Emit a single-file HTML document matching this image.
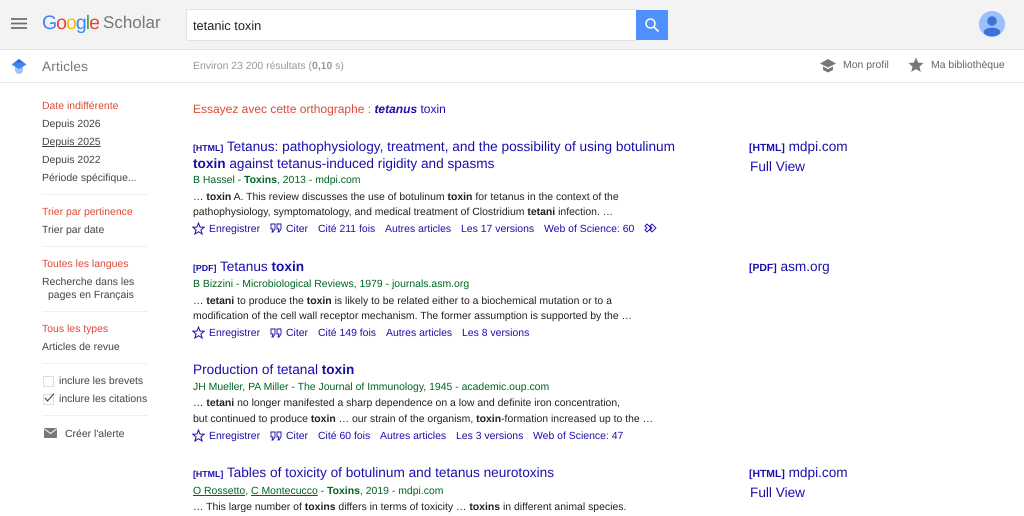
<!DOCTYPE html>
<html><head><meta charset="utf-8"><style>
html,body{margin:0;padding:0;background:#fff;}
body{width:1024px;height:516px;overflow:hidden;position:relative;font-family:"Liberation Sans",sans-serif;font-size:10.45px;color:#222;text-rendering:geometricPrecision;filter:blur(.25px);}
.t{position:absolute;white-space:nowrap;line-height:14px;}
.s{color:#444;}
.r{color:#dd4b39;}
.l{color:#1a0dab;}
.d{color:#222;}
.g{color:#006621;}
.s,.r,.l,.d,.g{margin-top:1px;}
.h{font-size:13.63px;line-height:18px;color:#1a0dab;}
.tag{font-size:8.8px;font-weight:bold;color:#1a0dab;}
.tg2{font-size:10.4px;font-weight:bold;color:#1a0dab;}
.hr{position:absolute;left:42px;width:106px;height:1px;background:#efefef;}
svg{position:absolute;}
</style></head><body>
<div style="position:absolute;left:0;top:0;width:1024px;height:49px;background:#f3f3f3;border-bottom:1px solid #e4e4e4"></div>
<div style="position:absolute;left:0;top:82px;width:1024px;height:1px;background:#e8e8e8"></div>

<svg style="left:11px;top:18px" width="16" height="12"><path d="M0 1H16M0 5.5H16M0 10H16" stroke="#6f6f6f" stroke-width="1.7"/></svg>
<div class="t" style="left:42px;top:10px;font-size:19.5px;line-height:26px;letter-spacing:-1px"><span style="color:#4285f4">G</span><span style="color:#ea4335">o</span><span style="color:#fbbc05">o</span><span style="color:#4285f4">g</span><span style="color:#34a853">l</span><span style="color:#ea4335">e</span></div>
<div class="t" style="left:103px;top:10px;font-size:17px;line-height:26px;color:#777">Scholar</div>

<div style="position:absolute;left:186px;top:9px;width:450px;height:30px;background:#fff;border:1px solid #e2e2e2;border-right:0"></div>
<div class="t" style="left:193px;top:19px;font-size:12.8px;color:#222">tetanic toxin</div>
<div style="position:absolute;left:636px;top:10px;width:32px;height:30px;background:#4d90fe;border-radius:0 1px 1px 0"></div>
<svg style="left:644px;top:17px" width="16" height="16"><circle cx="6.5" cy="6.5" r="4.5" fill="none" stroke="#fff" stroke-width="1.5"/><path d="M10 10L14.5 14.5" stroke="#fff" stroke-width="1.7"/></svg>
<svg style="left:979px;top:11px" width="26" height="26"><circle cx="13" cy="13" r="13" fill="#9cc0fb"/><circle cx="13" cy="10" r="4.8" fill="#3f72d9"/><ellipse cx="13" cy="21" rx="8.2" ry="4.4" fill="#3f72d9"/></svg>

<svg style="left:11px;top:58px" width="16" height="16"><path d="M8 8L12 8.5V12A4 4 0 0 1 4 12V8.5Z" fill="#a1c2fa"/><path d="M8 1L15.5 6.5 8 11 .5 6.5Z" fill="#4285f4"/><path d="M3.5 4.5L8 1 12.5 4.5Z" fill="#3367d6"/></svg>
<div class="t" style="left:42px;top:58px;font-size:13.6px;line-height:18px;color:#777;letter-spacing:.2px">Articles</div>
<div class="t" style="left:193px;top:60px;color:#999">Environ 23 200 résultats (<b>0,10</b> s)</div>
<svg style="left:820px;top:58px" width="16" height="15"><path d="M8 1L16 5.5 8 9.5 0 5.5Z" fill="#777"/><path d="M3 8.5L8 11 13 8.5V12L8 14.5 3 12Z" fill="#777"/></svg>
<div class="t" style="left:843px;top:59px;color:#666">Mon profil</div>
<svg style="left:908px;top:57px" width="16" height="15"><path d="M8 .5L10.2 5.6 15.6 6 11.5 9.6 12.8 14.9 8 12.1 3.2 14.9 4.5 9.6 .4 6 5.8 5.6Z" fill="#777"/></svg>
<div class="t" style="left:931px;top:59px;color:#666">Ma bibliothèque</div>

<div class="t r" style="left:42px;top:99px">Date indifférente</div>
<div class="t s" style="left:42px;top:117px">Depuis 2026</div>
<div class="t s" style="left:42px;top:135px;text-decoration:underline">Depuis 2025</div>
<div class="t s" style="left:42px;top:153px">Depuis 2022</div>
<div class="t s" style="left:42px;top:171px">Période spécifique...</div>
<div class="hr" style="top:194px"></div>
<div class="t r" style="left:42px;top:205px">Trier par pertinence</div>
<div class="t s" style="left:42px;top:223px">Trier par date</div>
<div class="hr" style="top:246px"></div>
<div class="t r" style="left:42px;top:257px">Toutes les langues</div>
<div class="t s" style="left:42px;top:275px">Recherche dans les</div>
<div class="t s" style="left:48px;top:288px">pages en Français</div>
<div class="hr" style="top:311px"></div>
<div class="t r" style="left:42px;top:322px">Tous les types</div>
<div class="t s" style="left:42px;top:340px">Articles de revue</div>
<div class="hr" style="top:363px"></div>
<div style="position:absolute;left:43px;top:376px;width:9px;height:9px;border:1px solid #ddd;background:#fff"></div>
<div class="t s" style="left:59px;top:374px">inclure les brevets</div>
<div style="position:absolute;left:43px;top:394px;width:9px;height:9px;border:1px solid #ddd;background:#fff"></div>
<svg style="left:44px;top:392px" width="11" height="11"><path d="M1 6L3.5 9 10 1.5" fill="none" stroke="#444" stroke-width="1.1"/></svg>
<div class="t s" style="left:59px;top:392px">inclure les citations</div>
<div class="hr" style="top:415px"></div>
<svg style="left:44px;top:428px" width="13" height="10"><rect width="13" height="10" rx="1" fill="#777"/><path d="M.5 1L6.5 5.5 12.5 1" fill="none" stroke="#fff" stroke-width="1"/></svg>
<div class="t s" style="left:65px;top:427px">Créer l'alerte</div>

<div class="t" style="left:193px;top:101px;font-size:12px;line-height:16px;color:#dd4b39">Essayez avec cette orthographe : <span class="l"><b><i>tetanus</i></b> toxin</span></div>

<div class="t h" style="left:193px;top:138px"><span class="tag">[HTML]</span> Tetanus: pathophysiology, treatment, and the possibility of using botulinum</div>
<div class="t h" style="left:193px;top:155px"><b>toxin</b> against tetanus-induced rigidity and spasms</div>
<div class="t g" style="left:193px;top:173px">B Hassel - <b>Toxins</b>, 2013 - mdpi.com</div>
<div class="t d" style="left:193px;top:190px">… <b>toxin</b> A. This review discusses the use of botulinum <b>toxin</b> for tetanus in the context of the</div>
<div class="t d" style="left:193px;top:205px">pathophysiology, symptomatology, and medical treatment of Clostridium <b>tetani</b> infection. …</div>
<svg style="left:192px;top:222px" width="13" height="13"><path d="M6.5 1L8 5 12.3 5.2 8.9 7.9 10.1 12 6.5 9.7 2.9 12 4.1 7.9 .7 5.2 5 5Z" fill="none" stroke="#1a0dab" stroke-width="1"/></svg>
<div class="t l" style="left:209px;top:222px">Enregistrer</div>
<svg style="left:270px;top:223px" width="12" height="10"><path d="M1 1H5V6L3 9H2L3 6H1ZM7 1H11V6L9 9H8L9 6H7Z" fill="none" stroke="#1a0dab" stroke-width=".9"/></svg>
<div class="t l" style="left:286px;top:222px">Citer</div>
<div class="t l" style="left:318px;top:222px">Cité 211 fois</div>
<div class="t l" style="left:385px;top:222px">Autres articles</div>
<div class="t l" style="left:461px;top:222px">Les 17 versions</div>
<div class="t l" style="left:544px;top:222px">Web of Science: 60</div>
<svg style="left:644px;top:223px" width="13" height="10"><path d="M1 3L3 1 7 5 3 9 1 7 3 5ZM6 3L8 1 12 5 8 9 6 7 8 5Z" fill="none" stroke="#1a0dab" stroke-width=".9"/></svg>

<div class="t h" style="left:749px;top:138px"><span class="tg2">[HTML]</span> mdpi.com</div>
<div class="t h" style="left:750px;top:158px">Full View</div>

<div class="t h" style="left:193px;top:258px"><span class="tag">[PDF]</span> Tetanus <b>toxin</b></div>
<div class="t g" style="left:193px;top:277px">B Bizzini - Microbiological Reviews, 1979 - journals.asm.org</div>
<div class="t d" style="left:193px;top:294px">… <b>tetani</b> to produce the <b>toxin</b> is likely to be related either to a biochemical mutation or to a</div>
<div class="t d" style="left:193px;top:309px">modification of the cell wall receptor mechanism. The former assumption is supported by the …</div>
<svg style="left:192px;top:326px" width="13" height="13"><path d="M6.5 1L8 5 12.3 5.2 8.9 7.9 10.1 12 6.5 9.7 2.9 12 4.1 7.9 .7 5.2 5 5Z" fill="none" stroke="#1a0dab" stroke-width="1"/></svg>
<div class="t l" style="left:209px;top:326px">Enregistrer</div>
<svg style="left:270px;top:328px" width="12" height="10"><path d="M1 1H5V6L3 9H2L3 6H1ZM7 1H11V6L9 9H8L9 6H7Z" fill="none" stroke="#1a0dab" stroke-width=".9"/></svg>
<div class="t l" style="left:286px;top:326px">Citer</div>
<div class="t l" style="left:318px;top:326px">Cité 149 fois</div>
<div class="t l" style="left:386px;top:326px">Autres articles</div>
<div class="t l" style="left:462px;top:326px">Les 8 versions</div>
<div class="t h" style="left:749px;top:258px"><span class="tg2">[PDF]</span> asm.org</div>

<div class="t h" style="left:193px;top:361px">Production of tetanal <b>toxin</b></div>
<div class="t g" style="left:193px;top:380px">JH Mueller, PA Miller - The Journal of Immunology, 1945 - academic.oup.com</div>
<div class="t d" style="left:193px;top:396px">… <b>tetani</b> no longer manifested a sharp dependence on a low and definite iron concentration,</div>
<div class="t d" style="left:193px;top:412px">but continued to produce <b>toxin</b> … our strain of the organism, <b>toxin</b>-formation increased up to the …</div>
<svg style="left:192px;top:429px" width="13" height="13"><path d="M6.5 1L8 5 12.3 5.2 8.9 7.9 10.1 12 6.5 9.7 2.9 12 4.1 7.9 .7 5.2 5 5Z" fill="none" stroke="#1a0dab" stroke-width="1"/></svg>
<div class="t l" style="left:209px;top:429px">Enregistrer</div>
<svg style="left:270px;top:431px" width="12" height="10"><path d="M1 1H5V6L3 9H2L3 6H1ZM7 1H11V6L9 9H8L9 6H7Z" fill="none" stroke="#1a0dab" stroke-width=".9"/></svg>
<div class="t l" style="left:286px;top:429px">Citer</div>
<div class="t l" style="left:318px;top:429px">Cité 60 fois</div>
<div class="t l" style="left:380px;top:429px">Autres articles</div>
<div class="t l" style="left:456px;top:429px">Les 3 versions</div>
<div class="t l" style="left:533px;top:429px">Web of Science: 47</div>

<div class="t h" style="left:193px;top:464px"><span class="tag">[HTML]</span> Tables of toxicity of botulinum and tetanus neurotoxins</div>
<div class="t g" style="left:193px;top:484px"><u>O Rossetto</u>, <u>C Montecucco</u> - <b>Toxins</b>, 2019 - mdpi.com</div>
<div class="t d" style="left:193px;top:500px">… This large number of <b>toxins</b> differs in terms of toxicity … <b>toxins</b> in different animal species.</div>
<div class="t h" style="left:749px;top:464px"><span class="tg2">[HTML]</span> mdpi.com</div>
<div class="t h" style="left:750px;top:484px">Full View</div>
</body></html>
